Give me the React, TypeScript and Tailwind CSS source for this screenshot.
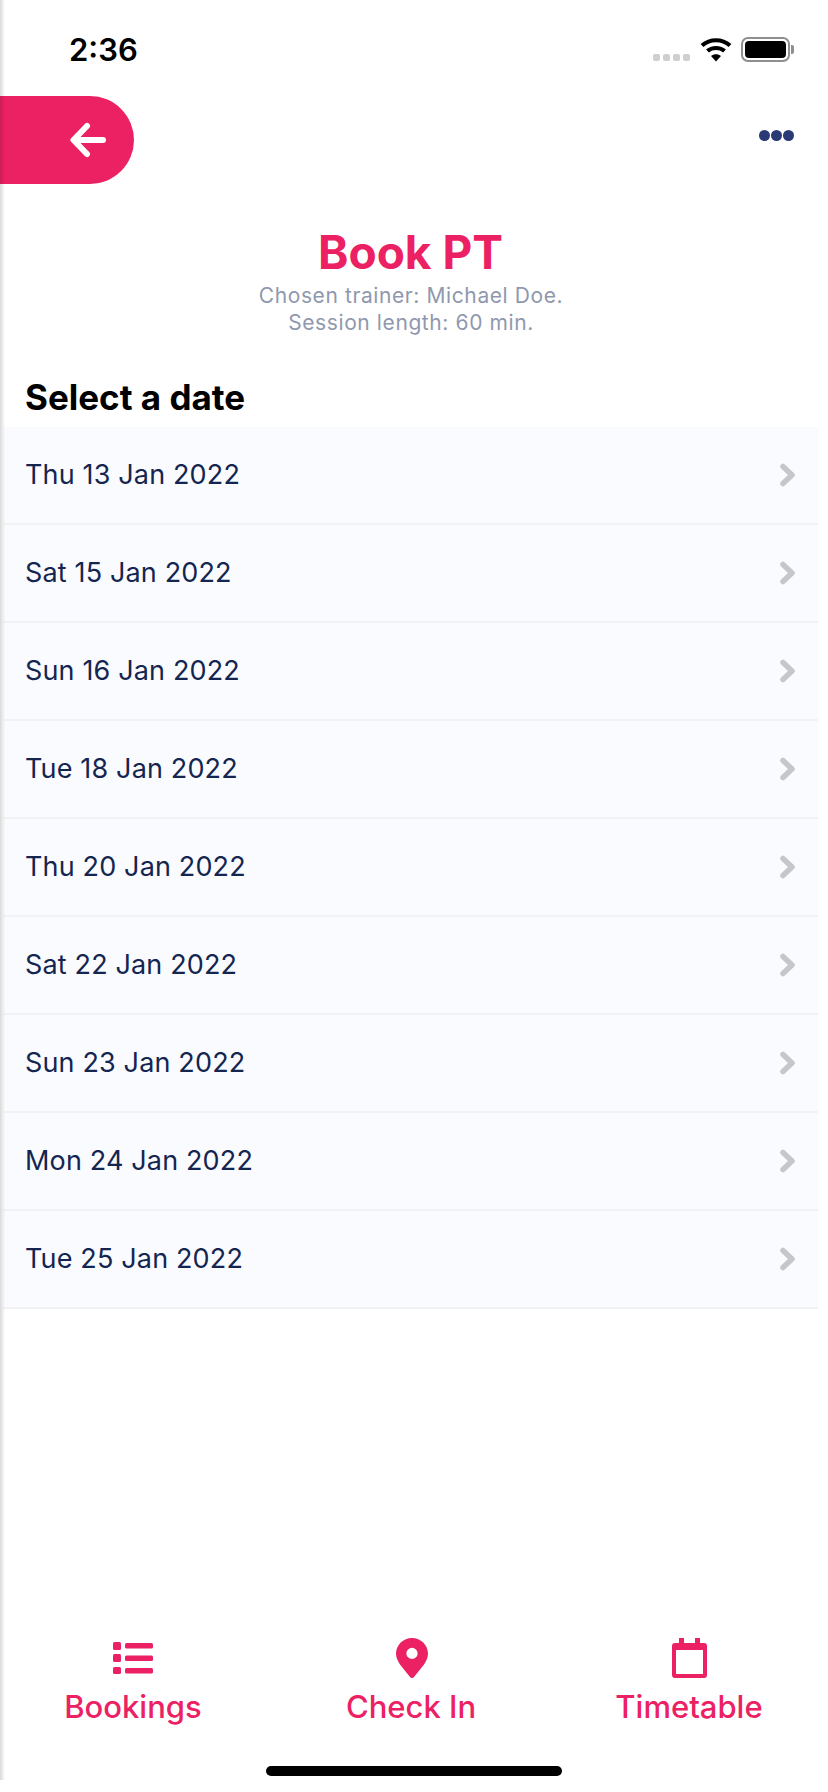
import React from "react";

const dates = [
  "Thu 13 Jan 2022",
  "Sat 15 Jan 2022",
  "Sun 16 Jan 2022",
  "Tue 18 Jan 2022",
  "Thu 20 Jan 2022",
  "Sat 22 Jan 2022",
  "Sun 23 Jan 2022",
  "Mon 24 Jan 2022",
  "Tue 25 Jan 2022",
];

const StatusBar = () => (
  <div className="flex justify-between h-[96px] pl-[69px] pr-[34px]">
    <span className="mt-[30px] text-[31px] leading-[40px] font-semibold text-black">2:36</span>
    <div className="flex items-start mt-[37px]">
      <div className="flex gap-[3px] mt-[17px] mr-[10px]">
        <span className="w-[7px] h-[7px] rounded-[2px] bg-[#cfcfcf]" />
        <span className="w-[7px] h-[7px] rounded-[2px] bg-[#cfcfcf]" />
        <span className="w-[7px] h-[7px] rounded-[2px] bg-[#cfcfcf]" />
        <span className="w-[7px] h-[7px] rounded-[2px] bg-[#cfcfcf]" />
      </div>
      <svg width="32" height="25" viewBox="0 0 32 25" fill="none" className="mr-[9px]">
        <path d="M2 8.5 C10 1.5 22 1.5 30 8.5" stroke="#000" strokeWidth="4.2" />
        <path d="M7.5 14 C12 10 20 10 24.5 14" stroke="#000" strokeWidth="4.2" />
        <path d="M16 24.5 L11 19 C14 16.6 18 16.6 21 19 Z" fill="#000" />
      </svg>
      <div className="flex items-center">
        <div className="w-[49px] h-[25px] rounded-[7px] border-2 border-[#8f8f8f] p-[2px]">
          <div className="w-full h-full rounded-[4px] bg-black" />
        </div>
        <span className="w-[3px] h-[9px] ml-[1px] rounded-r-[2px] bg-[#8f8f8f]" />
      </div>
    </div>
  </div>
);

const ListIcon = () => (
  <svg width="40" height="32" viewBox="0 0 40 32" fill="#ec2163">
    <rect x="0" y="0" width="8" height="8" rx="1.5" />
    <rect x="0" y="12" width="8" height="8" rx="1.5" />
    <rect x="0" y="25" width="8" height="7" rx="1.5" />
    <rect x="12" y="1" width="28" height="5.5" rx="1.5" />
    <rect x="12" y="13.5" width="28" height="5.5" rx="1.5" />
    <rect x="12" y="26" width="28" height="5.5" rx="1.5" />
  </svg>
);

const PinIcon = () => (
  <svg width="32" height="40" viewBox="0 0 32 40" fill="none" className="ml-[2px]">
    <path
      fillRule="evenodd"
      clipRule="evenodd"
      d="M16 0C7.2 0 0 7 0 15.6 0 20 2 23.4 4 26.4L14 39C15 40.3 17 40.3 18 39L28 26.4C30 23.4 32 20 32 15.6 32 7 24.8 0 16 0ZM16 21A5.6 5.6 0 1 1 16 9.8 5.6 5.6 0 0 1 16 21Z"
      fill="#ec2163"
    />
  </svg>
);

const CalendarIcon = () => (
  <svg width="35" height="40" viewBox="0 0 35 40" fill="#ec2163">
    <rect x="7" y="0" width="5" height="8" />
    <rect x="23" y="0" width="5" height="8" />
    <path
      fillRule="evenodd"
      clipRule="evenodd"
      d="M3 5H32A3 3 0 0 1 35 8V37A3 3 0 0 1 32 40H3A3 3 0 0 1 0 37V8A3 3 0 0 1 3 5ZM4 12V36H31V12Z"
    />
  </svg>
);

const Tab = ({ icon, label }: { icon: React.ReactNode; label: string }) => (
  <div className="flex flex-col items-center">
    <div className="h-[40px] flex items-center justify-center">{icon}</div>
    <span className="mt-[9px] text-[31px] leading-[40px] font-medium text-[#ec2163]">{label}</span>
  </div>
);

export default function App() {
  return (
    <div className="relative w-[828px] h-[1792px] flex flex-col bg-white overflow-hidden font-['Inter',sans-serif]">
      <StatusBar />

      <div className="flex items-center justify-between h-[88px] pr-[34px]">
        <div className="flex items-center justify-end w-[134px] h-[88px] pr-[28px] rounded-r-[44px] bg-[#ec2163]">
          <svg width="36" height="36" viewBox="0 0 36 36" fill="none">
            <path
              d="M33 18H4M17 4L3.5 18L17 32"
              stroke="#fff"
              strokeWidth="6"
              strokeLinecap="round"
              strokeLinejoin="round"
            />
          </svg>
        </div>
        <div className="flex gap-[1px] mb-[10px]">
          <span className="w-[11px] h-[11px] rounded-full bg-[#293a75]" />
          <span className="w-[11px] h-[11px] rounded-full bg-[#293a75]" />
          <span className="w-[11px] h-[11px] rounded-full bg-[#293a75]" />
        </div>
      </div>

      <div className="flex flex-col items-center mt-[43px] pr-[7px]">
        <h1 className="text-[46px] leading-[50px] font-bold text-[#ec2163]">Book PT</h1>
        <p className="mt-[5px] pl-[1px] text-center text-[21px] leading-[27px] tracking-[0.6px] text-[#8f98ae]">
          Chosen trainer: Michael Doe.
          <br />
          Session length: 60 min.
        </p>
      </div>

      <h2 className="mt-[41px] pl-[25px] text-[35px] leading-[40px] font-bold text-black">Select a date</h2>

      <ul className="mt-[10px] ml-[3px] w-[815px] bg-[#fafbff]">
        {dates.map((d) => (
          <li key={d} className="flex items-center justify-between h-[98px] pl-[22px] pr-[22px] border-b-2 border-[#f1f2f5]">
            <span className="text-[27px] leading-[32px] tracking-[0.15px] text-[#14264f]">{d}</span>
            <svg width="16" height="24" viewBox="0 0 16 24" fill="none">
              <path
                d="M3 3.5L12 12L3 20.5"
                stroke="#c6c7cb"
                strokeWidth="5.5"
                strokeLinecap="round"
                strokeLinejoin="round"
              />
            </svg>
          </li>
        ))}
      </ul>

      <div className="mt-auto">
        <div className="grid grid-cols-[266px_290px_266px]">
          <Tab icon={<ListIcon />} label="Bookings" />
          <Tab icon={<PinIcon />} label="Check In" />
          <Tab icon={<CalendarIcon />} label="Timetable" />
        </div>
        <div className="w-[296px] h-[10px] mt-[39px] mb-[16px] ml-[266px] rounded-full bg-black" />
      </div>

      {/* shadow of the screen underneath, runs down the left edge */}
      <div className="absolute left-0 top-0 w-[5px] h-[1780px] bg-gradient-to-r from-black/15 to-transparent" />
    </div>
  );
}
